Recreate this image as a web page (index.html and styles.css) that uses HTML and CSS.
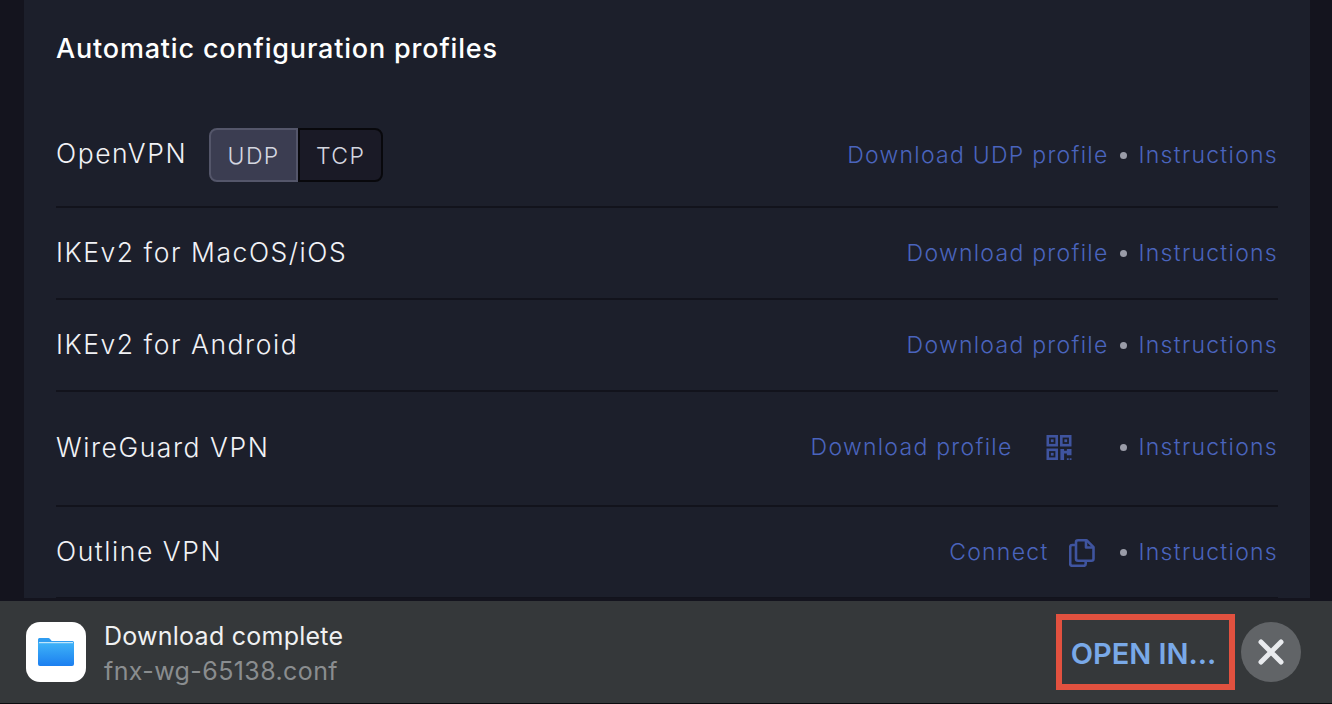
FILE: index.html
```html
<!DOCTYPE html>
<html lang="en">
<head>
<meta charset="utf-8">
<title>Automatic configuration profiles</title>
<link rel="stylesheet" href="styles.css">
</head>
<body>
<div class="page">
  <main class="card">
    <h2 class="title">Automatic configuration profiles</h2>
    <section class="row row-first">
      <div class="name-group">
        <span class="name">OpenVPN</span>
        <div class="toggle"><span class="tog tog-on">UDP</span><span class="tog tog-off">TCP</span></div>
      </div>
      <div class="actions"><a class="link">Download UDP profile</a><i class="dot"></i><a class="link">Instructions</a></div>
    </section>
    <section class="row">
      <span class="name">IKEv2 for MacOS/iOS</span>
      <div class="actions"><a class="link">Download profile</a><i class="dot"></i><a class="link">Instructions</a></div>
    </section>
    <section class="row">
      <span class="name">IKEv2 for Android</span>
      <div class="actions"><a class="link">Download profile</a><i class="dot"></i><a class="link">Instructions</a></div>
    </section>
    <section class="row row-tall">
      <span class="name">WireGuard VPN</span>
      <div class="actions"><a class="link">Download profile</a>
        <svg class="icon-qr" width="26" height="25" viewBox="0 0 27 27" fill="none" stroke="#3f549f" stroke-width="2.8">
          <rect x="1.400" y="1.400" width="9.600" height="9.600"/><rect x="16" y="1.400" width="9.600" height="9.600"/><rect x="1.400" y="16" width="9.600" height="9.600"/>
          <rect x="4.700" y="4.700" width="3" height="3" fill="#3f549f" stroke="none"/><rect x="19.300" y="4.700" width="3" height="3" fill="#3f549f" stroke="none"/><rect x="4.700" y="19.300" width="3" height="3" fill="#3f549f" stroke="none"/>
          <path d="M15 15h4v2h3v-2h5v7h-5v-2h-3v7h-4z" fill="#3f549f" stroke="none"/>
          <path d="M22 25h2v2h-2zM25 25h2v2h-2z" fill="#3f549f" stroke="none"/>
        </svg>
        <i class="dot"></i><a class="link">Instructions</a></div>
    </section>
    <section class="row">
      <span class="name">Outline VPN</span>
      <div class="actions"><a class="link">Connect</a>
        <svg class="icon-copy" width="26" height="29" viewBox="0 0 26 29" fill="none" stroke="#3f549f" stroke-width="2.600" stroke-linejoin="round">
          <path d="M9 2.200h8.500l7 7v11.600a2 2 0 0 1-2 2H9a2 2 0 0 1-2-2V4.200a2 2 0 0 1 2-2z"/>
          <path d="M17 2.500v7h7"/>
          <path d="M7 7H3.200a2 2 0 0 0-2 2v16.800a2 2 0 0 0 2 2h11.500a2 2 0 0 0 2-2V23"/>
        </svg>
        <i class="dot"></i><a class="link">Instructions</a></div>
    </section>
  </main>
  <footer class="bar">
    <div class="app-icon">
      <svg width="36" height="28" viewBox="0 0 38 28" preserveAspectRatio="none">
        <defs><linearGradient id="folder" x1="0" y1="0" x2="0" y2="1"><stop offset="0" stop-color="#3fb4f8"/><stop offset="1" stop-color="#1c7ff0"/></linearGradient></defs>
        <path d="M1.500 0h9.500a2 2 0 0 1 1.500.7L14.500 3h22a1.500 1.500 0 0 1 1.500 1.500V6H0V1.500A1.500 1.500 0 0 1 1.500 0z" fill="#2f9cf0"/>
        <rect x="0" y="4" width="38" height="24" rx="2" fill="url(#folder)"/>
        <rect x="1" y="4" width="36" height="1.200" fill="#bfe5fc"/>
      </svg>
    </div>
    <div class="file">
      <span class="file-title">Download complete</span>
      <span class="file-name">fnx-wg-65138.conf</span>
    </div>
    <button class="open">OPEN IN...</button>
    <button class="close" aria-label="Close">
      <svg width="26" height="26" viewBox="0 0 26 26" stroke="#e9ebee" stroke-width="5" stroke-linecap="round"><path d="M3 3l20 20M23 3L3 23"/></svg>
    </button>
  </footer>
</div>
</body>
</html>
```

FILE: styles.css
```css
* { box-sizing: border-box; }
html, body { margin: 0; height: 100%; }
body {
  background: #14141e;
  font-family: Inter, "Liberation Sans", sans-serif;
  overflow: hidden;
}
.page {
  width: 1332px;
  height: 704px;
  display: flex;
  flex-direction: column;
  background: #14141e;
}
.card {
  flex: 1;
  min-height: 0;
  margin: 0 22px 3px 24px;
  padding: 0 32px;
  background: #1c1f2b;
  overflow: hidden;
}
.title {
  margin: 0;
  height: 116px;
  padding-top: 31px;
  font-size: 27px;
  line-height: 36px;
  font-weight: 500;
  color: #ffffff;
  letter-spacing: 0.82px;
}
.row {
  height: 92px;
  display: flex;
  align-items: center;
  justify-content: space-between;
  border-bottom: 2px solid #12131c;
}
.row-first { padding-bottom: 12px; }
.row-tall { height: 115px; padding-bottom: 3px; }
.name-group { display: flex; align-items: center; gap: 22px; }
.name {
  margin-bottom: 2px;
  font-size: 26.500px;
  font-weight: 300;
  letter-spacing: 1.550px;
  color: #f1f2f6;
}
.name-group .name { margin-bottom: 4px; }
.row-tall .name { margin-bottom: 1px; }
.toggle { display: flex; }
.tog {
  height: 54px;
  padding-top: 2px;
  display: flex;
  align-items: center;
  justify-content: center;
  font-size: 23px;
  font-weight: 300;
  letter-spacing: 1.4px;
  color: #d5d7e0;
}
.tog-on {
  width: 89px;
  background: #3b3d51;
  border: 2px solid #54566a;
  border-radius: 8px 0 0 8px;
}
.tog-off {
  width: 85px;
  background: #1a1a26;
  border: 2px solid #08080c;
  border-radius: 0 8px 8px 0;
}
.actions { display: flex; align-items: center; }
.link {
  font-size: 23px;
  font-weight: 300;
  letter-spacing: 1.27px;
  color: #4a64bd;
}
.dot {
  width: 7px;
  height: 7px;
  margin: 0 12px 0 11px;
  border-radius: 50%;
  background: #9a9ca8;
}
.icon-qr { margin: 0 37px 0 33px; }
.icon-copy { margin: 0 14px 0 20px; }
.bar {
  flex: none;
  height: 103px;
  display: flex;
  align-items: center;
  padding: 0 31px 0 26px;
  background: #35383a;
  border-bottom: 1px solid #0c0c0e;
}
.app-icon {
  width: 60px;
  height: 60px;
  margin-right: 18px;
  border-radius: 14px;
  background: #ffffff;
  display: flex;
  align-items: center;
  justify-content: center;
}
.file { flex: 1; display: flex; flex-direction: column; gap: 4px; padding-top: 4px; }
.file-title {
  font-size: 25px;
  line-height: 31px;
  letter-spacing: 0.25px;
  color: #f0f1f2;
}
.file-name {
  font-size: 25px;
  line-height: 31px;
  letter-spacing: 0.4px;
  color: #8a8d8f;
}
.open {
  width: 179px;
  height: 76px;
  margin-right: 6px;
  padding: 2px 4px 0 0;
  background: transparent;
  border: 6px solid #e2513f;
  font-family: Inter, "Liberation Sans", sans-serif;
  font-size: 29px;
  font-weight: 600;
  color: #79a9e8;
}
.close {
  width: 60px;
  height: 60px;
  padding: 0;
  border: 0;
  border-radius: 50%;
  background: #616467;
  display: flex;
  align-items: center;
  justify-content: center;
}
```
